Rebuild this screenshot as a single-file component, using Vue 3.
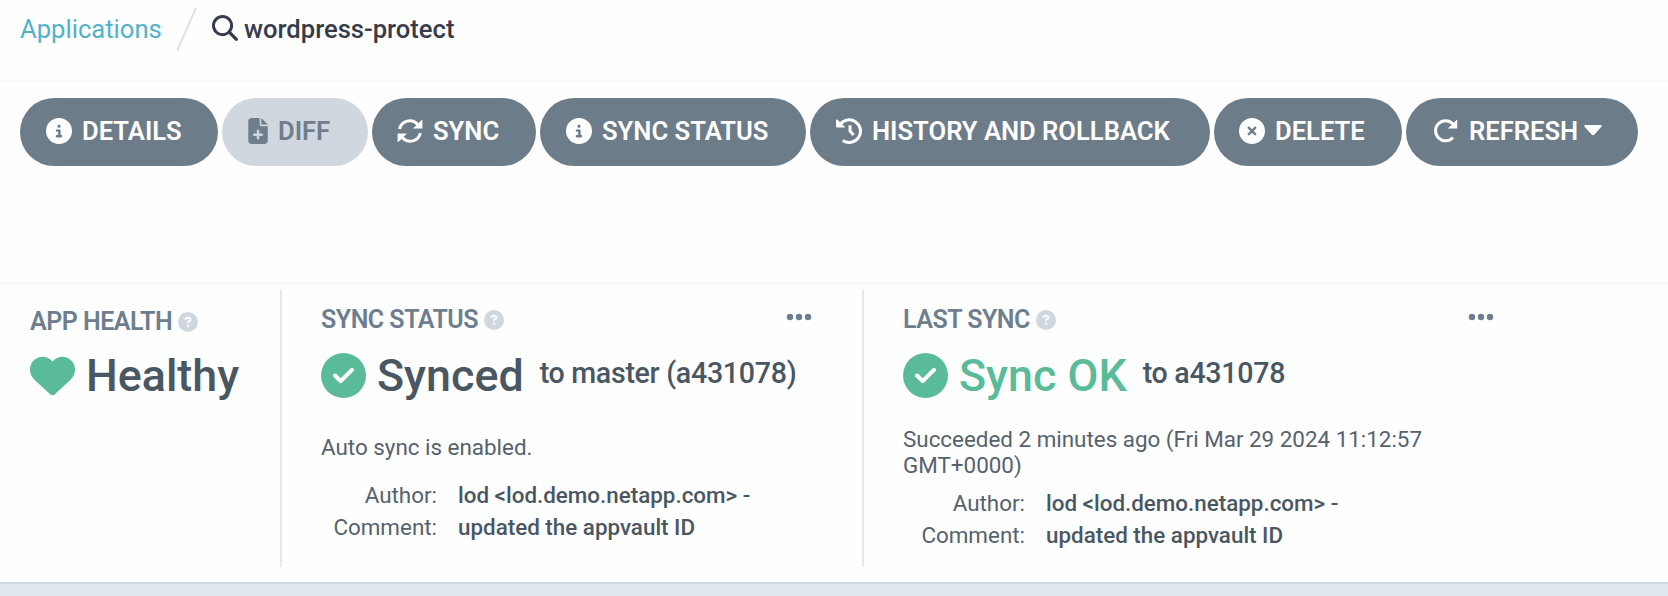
<script setup>
const info = 'M256 512A256 256 0 1 0 256 0a256 256 0 1 0 0 512zM216 336h24V272H216c-13.3 0-24-10.7-24-24s10.7-24 24-24h48c13.3 0 24 10.7 24 24v88h8c13.3 0 24 10.7 24 24s-10.7 24-24 24H216c-13.3 0-24-10.7-24-24s10.7-24 24-24zm40-208a32 32 0 1 1 0 64 32 32 0 1 1 0-64z'
const check = 'M256 512A256 256 0 1 0 256 0a256 256 0 1 0 0 512zM369 209L241 337c-9.4 9.4-24.6 9.4-33.9 0l-64-64c-9.4-9.4-9.4-24.6 0-33.9s24.6-9.4 33.9 0l47 47L335 175c9.4-9.4 24.6-9.4 33.9 0s9.4 24.6 0 33.9z'
const xmark = 'M256 512A256 256 0 1 0 256 0a256 256 0 1 0 0 512zM175 175c9.4-9.4 24.6-9.4 33.9 0l47 47 47-47c9.4-9.4 24.6-9.4 33.9 0s9.4 24.6 0 33.9l-47 47 47 47c9.4 9.4 9.4 24.6 0 33.9s-24.6 9.4-33.9 0l-47-47-47 47c-9.4 9.4-24.6 9.4-33.9 0s-9.4-24.6 0-33.9l47-47-47-47c-9.4-9.4-9.4-24.6 0-33.9z'
const question = 'M256 512A256 256 0 1 0 256 0a256 256 0 1 0 0 512zM169.8 165.3c7.9-22.3 29.1-37.3 52.8-37.3h58.3c34.9 0 63.1 28.3 63.1 63.1c0 22.6-12.1 43.5-31.7 54.8L280 264.4c-.2 13-10.9 23.6-24 23.6c-13.3 0-24-10.7-24-24V250.5c0-8.6 4.6-16.5 12.1-20.8l44.3-25.4c4.7-2.7 7.6-7.7 7.6-13.1c0-8.4-6.8-15.1-15.1-15.1H222.6c-3.4 0-6.4 2.1-7.5 5.3l-.4 1.2c-4.4 12.5-18.2 19-30.6 14.6s-19-18.2-14.6-30.6l.4-1.2zM224 352a32 32 0 1 1 64 0 32 32 0 1 1 -64 0z'
const heart = 'M47.6 300.4L228.3 469.1c7.5 7 17.4 10.9 27.7 10.9s20.2-3.9 27.7-10.9L464.4 300.4c30.4-28.3 47.6-68 47.6-109.5v-5.8c0-69.9-50.5-129.5-119.4-141C347 36.5 300.6 51.4 268 84L256 96 244 84c-32.6-32.6-79-47.5-124.6-39.9C50.5 55.6 0 115.2 0 185.1v5.8c0 41.5 17.2 81.2 47.6 109.5z'
const search = 'M416 208c0 45.9-14.9 88.3-40 122.7L502.6 457.4c12.5 12.5 12.5 32.8 0 45.3s-32.8 12.5-45.3 0L330.7 376c-34.4 25.2-76.8 40-122.7 40C93.1 416 0 322.9 0 208S93.1 0 208 0S416 93.1 416 208zM208 358a150 150 0 1 0 0-300 150 150 0 1 0 0 300z'
const file = 'M64 0C28.7 0 0 28.7 0 64V448c0 35.3 28.7 64 64 64H320c35.3 0 64-28.7 64-64V160H256c-17.7 0-32-14.3-32-32V0H64zM256 0V128H384L256 0zM168 248c0-8.8 7.2-16 16-16h16c8.8 0 16 7.2 16 16v56h56c8.8 0 16 7.2 16 16v16c0 8.8-7.2 16-16 16H216v56c0 8.8-7.2 16-16 16H184c-8.8 0-16-7.2-16-16V352H112c-8.8 0-16-7.2-16-16V320c0-8.8 7.2-16 16-16h56V248z'

const actions = [
  { id: 'details', label: 'DETAILS', path: info, box: '0 0 512 512' },
  { id: 'diff', label: 'DIFF', path: file, box: '0 0 384 512' },
  { id: 'sync', label: 'SYNC' },
  { id: 'sync-status', label: 'SYNC STATUS', path: info, box: '0 0 512 512' },
  { id: 'history', label: 'HISTORY AND ROLLBACK' },
  { id: 'delete', label: 'DELETE', path: xmark, box: '0 0 512 512' },
  { id: 'refresh', label: 'REFRESH' },
]
</script>

<template>
  <div class="page">
    <header class="crumbs">
      <a class="root">Applications</a>
      <svg class="slash" viewBox="0 0 24 46"><path d="M2 44L21 1" /></svg>
      <svg class="search" viewBox="0 0 512 512"><path :d="search" /></svg>
      <span class="current">wordpress-protect</span>
    </header>

    <nav class="toolbar">
      <button v-for="a in actions" :key="a.id" class="btn" :class="a.id" :disabled="a.id === 'diff'">
        <svg v-if="a.path" class="icon" :viewBox="a.box"><path :d="a.path" /></svg>
        <svg v-else-if="a.id === 'sync'" class="icon line" viewBox="0 0 26 26">
          <path d="M2.6 11A10.4 10.4 0 0 1 20.5 6.2L22.5 8.2M23.4 15A10.4 10.4 0 0 1 5.5 19.8L3.5 17.8" />
          <path class="solid" d="M25.4 1.4V10.6H15.8L18.4 8.2L22 4.6ZM.6 24.6V15.4H10.2L7.6 17.8L4 21.4Z" />
        </svg>
        <svg v-else-if="a.id === 'history'" class="icon line" viewBox="0 0 26 26">
          <path d="M4 6.6A11.3 11.3 0 1 1 6.8 22.5M14 7.2V13L17.6 17" />
          <path class="solid" d="M0 2.2Q0 1 1.2 1.6L8.6 8.4Q9 9.6 7.8 9.6H1.4Q0 9.6 0 8.2Z" />
        </svg>
        <svg v-else class="icon line" viewBox="0 0 26 26">
          <path d="M20 19.5A10 10 0 1 1 19.7 5.8L21.8 8.2" />
          <path class="solid" d="M24.2 1.4V10.6H14.6L17.2 8.2L21 4.6Z" />
        </svg>
        <span class="label">{{ a.label }}</span>
        <svg v-if="a.id === 'refresh'" class="caret" viewBox="0 0 18 11"><path d="M1.5 0H16.5Q18.6.4 17.2 2L10.4 9.6Q9 11 7.6 9.6L.8 2Q-.6.4 1.5 0Z" /></svg>
      </button>
    </nav>

    <main class="summary">
      <section class="panel health">
        <h2 class="title"><span>APP HEALTH</span><svg class="help" viewBox="0 0 512 512"><path :d="question" /></svg></h2>
        <div class="value">
          <svg class="mark" viewBox="0 0 512 512"><path :d="heart" /></svg>
          <span class="state">Healthy</span>
        </div>
      </section>

      <section class="panel synced">
        <h2 class="title">
          <span>SYNC STATUS</span><svg class="help" viewBox="0 0 512 512"><path :d="question" /></svg>
          <svg class="more" viewBox="0 0 26 8"><circle cx="4" cy="4" r="3.2" /><circle cx="13" cy="4" r="3.2" /><circle cx="22" cy="4" r="3.2" /></svg>
        </h2>
        <div class="value">
          <svg class="mark" viewBox="0 0 512 512"><path :d="check" /></svg>
          <span class="state">Synced</span>
          <span class="rev">to master (a431078)</span>
        </div>
        <p class="note">Auto sync is enabled.</p>
        <dl class="meta">
          <dt>Author:</dt><dd>lod &lt;lod.demo.netapp.com&gt; -</dd>
          <dt>Comment:</dt><dd>updated the appvault ID</dd>
        </dl>
      </section>

      <section class="panel last">
        <h2 class="title">
          <span>LAST SYNC</span><svg class="help" viewBox="0 0 512 512"><path :d="question" /></svg>
          <svg class="more" viewBox="0 0 26 8"><circle cx="4" cy="4" r="3.2" /><circle cx="13" cy="4" r="3.2" /><circle cx="22" cy="4" r="3.2" /></svg>
        </h2>
        <div class="value">
          <svg class="mark" viewBox="0 0 512 512"><path :d="check" /></svg>
          <span class="state ok">Sync OK</span>
          <span class="rev">to a431078</span>
        </div>
        <p class="note">Succeeded 2 minutes ago (Fri Mar 29 2024 11:12:57<br>GMT+0000)</p>
        <dl class="meta">
          <dt>Author:</dt><dd>lod &lt;lod.demo.netapp.com&gt; -</dd>
          <dt>Comment:</dt><dd>updated the appvault ID</dd>
        </dl>
      </section>
    </main>
    <footer class="below"></footer>
  </div>
</template>

<style>
html, body { overflow: hidden; background: #fefefe; }
</style>

<style scoped>
.page { width: 1668px; height: 596px; overflow: hidden; display: flex; flex-direction: column; background: #fefefe; font-family: Roboto, sans-serif; color: #495763; white-space: nowrap; }
svg { display: block; flex: none; fill: currentColor; }
.crumbs { box-sizing: border-box; height: 82px; flex: none; display: flex; align-items: flex-start; padding: 7px 0 0 20px; border-bottom: 2px solid #f4f7fb; font-size: 25.6px; line-height: 44px; font-weight: 500; }
.root { width: 142px; color: #4fb3c8; font-weight: 400; }
.slash { width: 24px; height: 46px; margin-left: 13px; fill: none; stroke: #dee2ec; stroke-width: 2; }
.search { width: 26px; height: 26px; margin: 8px 6px 0 13px; color: #363c4a; }
.current { color: #363c4a; }
.toolbar { height: 202px; flex: none; display: flex; gap: 4px; align-items: flex-start; box-sizing: border-box; padding: 16px 0 0 20px; border-bottom: 2px solid #f4f7fb; }
.btn { box-sizing: border-box; height: 68px; display: flex; align-items: center; border: 0; border-radius: 34px; padding: 0 0 3px 26px; background: #6d7c89; color: #fefefe; font: 600 25.6px Roboto, sans-serif; letter-spacing: 0; }
.icon { width: 26px; height: 26px; margin-right: 10px; }
.line { fill: none; stroke: currentColor; stroke-width: 3; }
.solid { fill: currentColor; stroke: none; }
.details { width: 198px; }
.diff { width: 146px; background: #d0d7de; color: #6f7e8c; }
.diff .icon { width: 20px; }
.sync { width: 164px; padding-left: 25px; }
.sync-status { width: 266px; }
.history { width: 400px; }
.delete { width: 188px; padding-left: 25px; }
.refresh { width: 232px; padding-left: 27px; }
.caret { width: 18px; height: 11px; margin-left: 6px; }
.summary { height: 298px; flex: none; display: flex; box-sizing: border-box; padding-top: 6px; }
.panel { box-sizing: border-box; height: 277px; border-right: 2px solid #e3e9f0; }
.health { width: 282px; padding: 17px 0 0 30px; }
.synced { width: 582px; padding: 15px 0 0 39px; }
.last { width: 660px; padding: 15px 0 0 39px; border: 0; }
.title { display: flex; align-items: center; height: 30px; margin: 0; font-size: 25px; letter-spacing: -.5px; line-height: 30px; font-weight: 600; color: #6d7f8f; }
.help { width: 20px; height: 20px; margin: 0 0 0 6px; color: #cfd7df; }
.more { width: 26px; height: 8px; margin: -7px 50px 0 auto; }
.last .more { margin-right: 30px; }
.value { display: flex; align-items: center; height: 48px; margin-top: 15px; }
.health .value { margin-top: 13px; }
.mark { width: 45px; height: 45px; margin-top: 2px; color: #5abb98; }
.state { margin: 4px 0 0 11px; font-size: 44.8px; line-height: 48px; font-weight: 500; }
.ok { color: #5abb98; }
.rev { margin: -2px 0 0 16px; font-size: 28.6px; letter-spacing: -.3px; font-weight: 500; }
.note { margin: 36px 0 0; font-size: 22.4px; line-height: 26px; color: #55626e; }
.last .note { margin-top: 28px; }
.meta { display: grid; grid-template-columns: 116px auto; column-gap: 21px; margin: 19px 0 0; font-size: 22.4px; line-height: 32px; }
.last .meta { margin-top: 9px; grid-template-columns: 122px auto; }
.meta dt { text-align: right; color: #55626e; }
.meta dd { margin: 0; font-weight: 500; }
.below { flex: 1; background: #e0e6ee; border-top: 2px solid #d1d7de; }
</style>
